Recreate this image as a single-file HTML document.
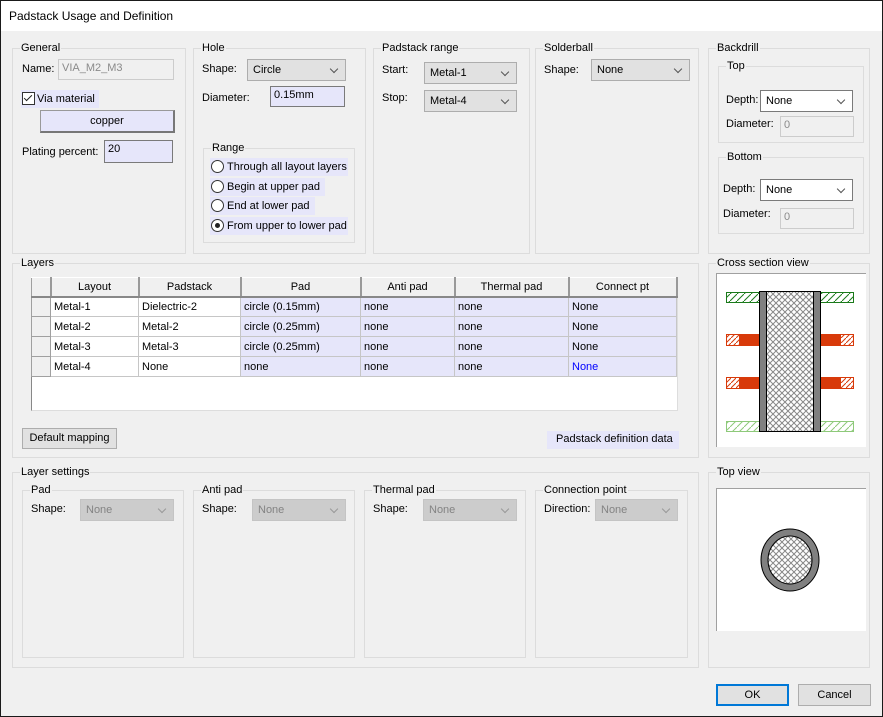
<!DOCTYPE html>
<html><head><meta charset="utf-8"><style>
*{box-sizing:border-box;margin:0;padding:0}
body{width:883px;height:717px;overflow:hidden;font-family:"Liberation Sans",Arial,sans-serif;font-size:11px;color:#000;background:#f0f0f0;position:relative}
#bd{position:absolute;left:0;top:0;width:883px;height:717px;border:1px solid #1a1a1a;z-index:5}
.a{position:absolute;white-space:nowrap}
.t{position:absolute;left:0;top:0;width:883px;height:31px;background:#fff}
.g{position:absolute;border:1px solid #dcdcdc}
.g>.l{position:absolute;top:-8px;left:7px;background:#f0f0f0;padding:0 1px;line-height:14px}
.cb{position:absolute;height:22px;border:1px solid #adadad;background:#e1e1e1;padding:4px 0 0 5px}
.cb.w{background:#fff;border-color:#7a7a7a}
.cb.d{background:#ccc;border-color:#c4c4c4;color:#838383}
.cb:after{content:"";position:absolute;right:8px;top:6px;width:5px;height:5px;border-right:1px solid #555;border-bottom:1px solid #555;transform:rotate(45deg)}
.cb.d:after{border-color:#999}
.ed{position:absolute;height:21px;border:1px solid #7a7a7a;background:#e6e6fa;padding:2px 0 0 3px}
.ed.d{background:#f0f0f0;border-color:#ccc;color:#8a8a8a}
.hl{position:absolute;background:#e6e6fa;height:18px;padding:2px 0 0 0}
.rb{display:inline-block;width:13px;height:13px;border:1px solid #333;border-radius:50%;background:#fff;vertical-align:-3px;margin-right:3px;position:relative}
.rb.on:after{content:"";position:absolute;left:3px;top:3px;width:5px;height:5px;border-radius:50%;background:#222}
.btn{position:absolute;border:1px solid #adadad;background:#e1e1e1;text-align:center;padding-top:4px}
table{border-collapse:collapse;position:absolute;left:31px;top:277px;table-layout:fixed}
td{height:20px;border:1px solid #c6c6c6;padding:0 3px;line-height:18px;white-space:nowrap;overflow:hidden}
th{height:19px;font-weight:normal;background:#f0f0f0;border:1px solid #a0a0a0;border-bottom:2px solid #888;border-right:2px solid #999;border-top:1px solid #fff}
td.rh{background:#f0f0f0;border-color:#a0a0a0}
td.b{background:#e6e6fa}
</style></head><body>
<div id="bd"></div>
<div class="t"></div>
<div class="a" style="left:9px;top:9px;font-size:12px">Padstack Usage and Definition</div>

<!-- General -->
<div class="g" style="left:12px;top:48px;width:174px;height:206px"><span class="l">General</span></div>
<div class="a" style="left:22px;top:63px">Name:</div>
<div class="ed d" style="left:58px;top:59px;width:116px">VIA_M2_M3</div>
<div class="hl" style="left:21px;top:90px;width:78px"></div>
<div class="a" style="left:22px;top:92px"><span style="display:inline-block;width:13px;height:13px;border:1px solid #333;background:#fff;vertical-align:-3px;position:relative;margin-right:2px"><span style="position:absolute;left:3px;top:0px;width:4px;height:8px;border-right:1.5px solid #222;border-bottom:1.5px solid #222;transform:rotate(45deg)"></span></span>Via material</div>
<div class="btn" style="left:40px;top:110px;width:135px;height:23px;background:#e6e6fa;border-color:#999;border-right:2px solid #777;border-bottom:2px solid #777">copper</div>
<div class="a" style="left:22px;top:146px">Plating percent:</div>
<div class="ed" style="left:104px;top:140px;width:69px;height:23px">20</div>

<!-- Hole -->
<div class="g" style="left:193px;top:48px;width:173px;height:206px"><span class="l">Hole</span></div>
<div class="a" style="left:202px;top:63px">Shape:</div>
<div class="cb" style="left:247px;top:59px;width:99px">Circle</div>
<div class="a" style="left:202px;top:92px">Diameter:</div>
<div class="ed" style="left:270px;top:86px;width:75px">0.15mm</div>
<div class="g" style="left:203px;top:148px;width:152px;height:95px"><span class="l">Range</span></div>
<div class="hl" style="left:210px;top:158px;width:138px"></div>
<div class="a" style="left:211px;top:160px"><span class="rb"></span>Through all layout layers</div>
<div class="hl" style="left:210px;top:178px;width:115px"></div>
<div class="a" style="left:211px;top:180px"><span class="rb"></span>Begin at upper pad</div>
<div class="hl" style="left:210px;top:197px;width:105px"></div>
<div class="a" style="left:211px;top:199px"><span class="rb"></span>End at lower pad</div>
<div class="hl" style="left:210px;top:217px;width:138px"></div>
<div class="a" style="left:211px;top:219px"><span class="rb on"></span>From upper to lower pad</div>

<!-- Padstack range -->
<div class="g" style="left:373px;top:48px;width:157px;height:206px"><span class="l">Padstack range</span></div>
<div class="a" style="left:382px;top:64px">Start:</div>
<div class="cb" style="left:424px;top:62px;width:93px">Metal-1</div>
<div class="a" style="left:382px;top:92px">Stop:</div>
<div class="cb" style="left:424px;top:90px;width:93px">Metal-4</div>

<!-- Solderball -->
<div class="g" style="left:535px;top:48px;width:164px;height:206px"><span class="l">Solderball</span></div>
<div class="a" style="left:544px;top:64px">Shape:</div>
<div class="cb" style="left:591px;top:59px;width:99px">None</div>

<!-- Backdrill -->
<div class="g" style="left:708px;top:48px;width:162px;height:206px"><span class="l">Backdrill</span></div>
<div class="g" style="left:718px;top:66px;width:146px;height:77px"><span class="l">Top</span></div>
<div class="a" style="left:726px;top:94px">Depth:</div>
<div class="cb w" style="left:760px;top:90px;width:93px">None</div>
<div class="a" style="left:726px;top:118px">Diameter:</div>
<div class="ed d" style="left:780px;top:116px;width:74px">0</div>
<div class="g" style="left:718px;top:157px;width:146px;height:77px"><span class="l">Bottom</span></div>
<div class="a" style="left:723px;top:183px">Depth:</div>
<div class="cb w" style="left:760px;top:179px;width:93px">None</div>
<div class="a" style="left:723px;top:208px">Diameter:</div>
<div class="ed d" style="left:780px;top:208px;width:74px">0</div>

<!-- Layers -->
<div class="g" style="left:12px;top:263px;width:687px;height:195px"><span class="l">Layers</span></div>
<div style="position:absolute;left:31px;top:277px;width:647px;height:134px;background:#fff;border:1px solid #888;border-right-color:#ddd;border-bottom-color:#ddd"></div>
<table>
<colgroup><col style="width:19px"><col style="width:88px"><col style="width:102px"><col style="width:120px"><col style="width:94px"><col style="width:114px"><col style="width:108px"></colgroup>
<tr><th></th><th>Layout</th><th>Padstack</th><th>Pad</th><th>Anti pad</th><th>Thermal pad</th><th>Connect pt</th></tr>
<tr><td class="rh"></td><td>Metal-1</td><td>Dielectric-2</td><td class="b">circle (0.15mm)</td><td class="b">none</td><td class="b">none</td><td class="b">None</td></tr>
<tr><td class="rh"></td><td>Metal-2</td><td>Metal-2</td><td class="b">circle (0.25mm)</td><td class="b">none</td><td class="b">none</td><td class="b">None</td></tr>
<tr><td class="rh"></td><td>Metal-3</td><td>Metal-3</td><td class="b">circle (0.25mm)</td><td class="b">none</td><td class="b">none</td><td class="b">None</td></tr>
<tr><td class="rh"></td><td>Metal-4</td><td>None</td><td class="b">none</td><td class="b">none</td><td class="b">none</td><td class="b" style="color:#0000ff">None</td></tr>
</table>
<div class="btn" style="left:22px;top:428px;width:95px;height:21px;padding-top:3px">Default mapping</div>
<div class="hl" style="left:547px;top:431px;width:132px;padding-left:9px">Padstack definition data</div>

<!-- Cross section -->
<div class="g" style="left:708px;top:263px;width:162px;height:195px"><span class="l">Cross section view</span></div>
<svg style="position:absolute;left:716px;top:273px" width="150" height="174">
<defs>
<pattern id="xh" width="6" height="6" patternUnits="userSpaceOnUse"><rect width="6" height="6" fill="#fff"/><path d="M0 0L6 6M6 0L0 6" stroke="#888" stroke-width="1"/></pattern>
<pattern id="dg" width="7" height="7" patternUnits="userSpaceOnUse"><path d="M0 7L7 0" stroke="#1a7a1a"/></pattern>
<pattern id="lg" width="7" height="7" patternUnits="userSpaceOnUse"><path d="M0 7L7 0" stroke="#8ec97a"/></pattern>
<pattern id="rd" width="5" height="5" patternUnits="userSpaceOnUse"><rect width="5" height="5" fill="#fff"/><path d="M0 5L5 0" stroke="#d83a0a"/></pattern>
</defs>
<rect x="0" y="0" width="150" height="174" fill="#fff"/>
<path d="M0.5 0V174M0 0.5H150" stroke="#a0a0a0"/>
<rect x="10.5" y="19.5" width="33" height="10" fill="url(#dg)" stroke="#1a7a1a"/>
<rect x="104.5" y="19.5" width="33" height="10" fill="url(#dg)" stroke="#1a7a1a"/>
<rect x="10.5" y="148.5" width="33" height="10" fill="url(#lg)" stroke="#8ec97a"/>
<rect x="104.5" y="148.5" width="33" height="10" fill="url(#lg)" stroke="#8ec97a"/>
<rect x="10" y="61" width="34" height="12" fill="#d83a0a"/><rect x="11" y="62" width="12" height="10" fill="url(#rd)"/>
<rect x="104" y="61" width="34" height="12" fill="#d83a0a"/><rect x="125" y="62" width="12" height="10" fill="url(#rd)"/>
<rect x="10" y="104" width="34" height="12" fill="#d83a0a"/><rect x="11" y="105" width="12" height="10" fill="url(#rd)"/>
<rect x="104" y="104" width="34" height="12" fill="#d83a0a"/><rect x="125" y="105" width="12" height="10" fill="url(#rd)"/>
<rect x="43.5" y="18.5" width="61" height="140" fill="url(#xh)" stroke="#000"/>
<rect x="44" y="19" width="6" height="139" fill="#808080"/><rect x="98" y="19" width="6" height="139" fill="#808080"/>
<path d="M50.5 19V158M97.5 19V158" stroke="#000"/>
</svg>

<!-- Layer settings -->
<div class="g" style="left:12px;top:472px;width:687px;height:196px"><span class="l">Layer settings</span></div>
<div class="g" style="left:22px;top:490px;width:162px;height:168px"><span class="l">Pad</span></div>
<div class="a" style="left:31px;top:503px">Shape:</div>
<div class="cb d" style="left:80px;top:499px;width:94px">None</div>
<div class="g" style="left:193px;top:490px;width:162px;height:168px"><span class="l">Anti pad</span></div>
<div class="a" style="left:202px;top:503px">Shape:</div>
<div class="cb d" style="left:252px;top:499px;width:94px">None</div>
<div class="g" style="left:364px;top:490px;width:162px;height:168px"><span class="l">Thermal pad</span></div>
<div class="a" style="left:373px;top:503px">Shape:</div>
<div class="cb d" style="left:423px;top:499px;width:94px">None</div>
<div class="g" style="left:535px;top:490px;width:153px;height:168px"><span class="l">Connection point</span></div>
<div class="a" style="left:544px;top:503px">Direction:</div>
<div class="cb d" style="left:595px;top:499px;width:83px">None</div>

<!-- Top view -->
<div class="g" style="left:708px;top:472px;width:162px;height:196px"><span class="l">Top view</span></div>
<svg style="position:absolute;left:716px;top:488px" width="150" height="143">
<defs><pattern id="xh2" width="6" height="6" patternUnits="userSpaceOnUse"><rect width="6" height="6" fill="#fff"/><path d="M0 0L6 6M6 0L0 6" stroke="#888" stroke-width="1"/></pattern></defs>
<rect width="150" height="143" fill="#fff"/>
<path d="M0.5 0V143M0 0.5H150" stroke="#a0a0a0"/>
<ellipse cx="74" cy="72" rx="29" ry="31" fill="#808080" stroke="#000"/>
<ellipse cx="74" cy="72" rx="22" ry="24" fill="url(#xh2)" stroke="#000"/>
</svg>

<div class="btn" style="left:716px;top:684px;width:73px;height:22px;border:2px solid #0078d7;padding-top:3px">OK</div>
<div class="btn" style="left:798px;top:684px;width:73px;height:22px">Cancel</div>
</body></html>
